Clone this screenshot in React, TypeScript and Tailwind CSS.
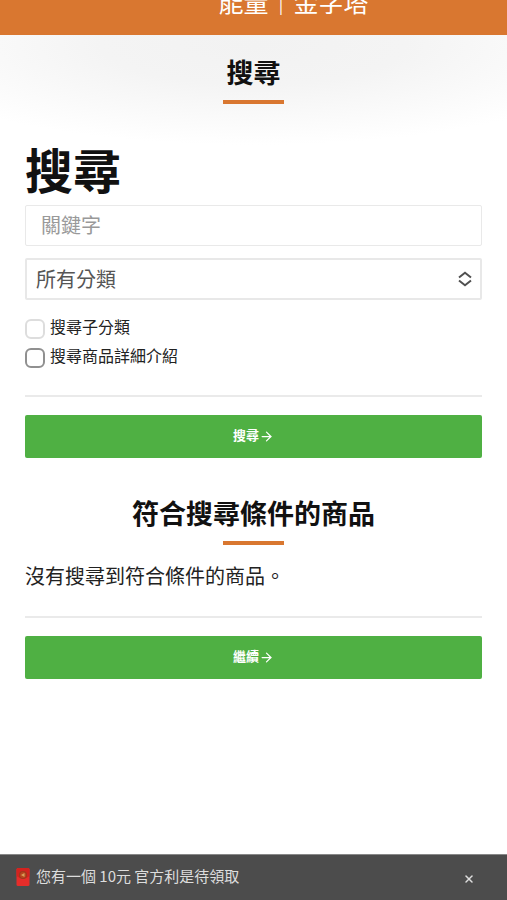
import { FC, ReactNode, useState } from "react"
import { ArrowRight, X } from "lucide-react"

type ChildrenProps = { children: ReactNode }

const SectionTitle: FC<ChildrenProps> = ({ children }) => (
  <h2 className="flex flex-col items-center gap-3 text-[27px] leading-8 font-bold text-[#111]">
    {children}
    <span className="h-1 w-[61px] bg-[#d97730]" />
  </h2>
)

const ActionButton: FC<ChildrenProps & { type?: "submit" | "button" }> = ({ children, type = "button" }) => (
  <button
    type={type}
    className="flex h-[43px] w-full items-center justify-center rounded-xs bg-[#4fb043] text-[13px] leading-5 font-bold text-white"
  >
    <span className="pb-1">{children}</span>
    <ArrowRight className="size-[15px]" strokeWidth={2} />
  </button>
)

const CheckOption: FC<{ id: string; label: string; className: string }> = ({ id, label, className }) => (
  <div className="flex h-[29px] items-start gap-[5px]">
    <input
      id={id}
      type="checkbox"
      className={`mt-[5px] size-5 shrink-0 appearance-none rounded-md border-2 bg-white checked:bg-[#4fb043] ${className}`}
    />
    <label htmlFor={id} className="text-base leading-6 text-[#222]">{label}</label>
  </div>
)

const SelectArrows: FC = () => (
  <svg
    viewBox="0 0 14 16"
    className="pointer-events-none col-start-1 row-start-1 mr-2.5 h-4 w-3.5 justify-self-end"
    fill="none"
    stroke="#505050"
    strokeWidth="2"
    aria-hidden="true"
  >
    <path d="M1 6.500 7 1.700l6 4.800M1 9.500l6 4.800 6-4.800" />
  </svg>
)

const RedPacket: FC = () => (
  <svg viewBox="0 0 14 18" className="h-[18px] w-3.5 shrink-0" aria-hidden="true">
    <rect x="0.5" y="0" width="13" height="18" rx="1.5" fill="#e62d2a" />
    <path d="M0.5 1.500Q0.500 0 2 0h10q1.500 0 1.500 1.500V8Q7 13 0.500 8z" fill="#d3231f" />
    <circle cx="7" cy="7" r="4" fill="#9c3a1c" />
    <circle cx="7" cy="7" r="3" fill="#b8461f" />
    <path d="M5 7 8.500 5v4z" fill="#d9a05c" />
  </svg>
)

const SearchForm: FC = () => (
  <form onSubmit={(e) => e.preventDefault()}>
    <input
      type="text"
      aria-label="關鍵字"
      placeholder="關鍵字"
      className="h-[41px] w-full rounded-xs border border-[#e9e9e9] px-[15px] pb-0.5 text-xl text-[#444] placeholder:text-[#999]"
    />
    <div className="mt-3 grid items-center">
      <select
        aria-label="所有分類"
        className="col-start-1 row-start-1 h-[42px] w-full appearance-none rounded-xs border-2 border-[#e8e8e8] bg-white px-[9px] text-xl text-[#555]"
      >
        <option>所有分類</option>
      </select>
      <SelectArrows />
    </div>
    <div className="mt-3.5">
      <CheckOption id="sub-category" label="搜尋子分類" className="border-[#ddd]" />
      <CheckOption id="description" label="搜尋商品詳細介紹" className="border-[#909090]" />
    </div>
    <hr className="mt-[23px] mb-[18px] border-t-2 border-[#eaeaea]" />
    <ActionButton type="submit">搜尋</ActionButton>
  </form>
)

export default function App() {
  const [noticeOpen, setNoticeOpen] = useState(true)

  return (
    <div lang="zh-Hant" className="flex min-h-screen flex-col bg-white font-['Noto_Sans_CJK_TC',sans-serif]">
      <header className="flex h-[35px] items-end justify-center overflow-hidden bg-[#d97730] pb-[18px] pl-20">
        <p className="text-[25px] leading-8 text-white">能量｜金字塔</p>
      </header>

      <main className="grow bg-[radial-gradient(ellipse_75%_100px_at_50%_10px,#f2f2f2,#f4f4f4_40%,#ffffff)] bg-no-repeat px-[25px] pt-[21px] pb-10">
        <SectionTitle>搜尋</SectionTitle>
        <h1 className="mt-[34px] mb-[7px] text-5xl leading-[60px] font-bold text-[#111]">搜尋</h1>
        <SearchForm />

        <section className="mt-[39px]">
          <SectionTitle>符合搜尋條件的商品</SectionTitle>
          <p className="mt-[17px] text-xl leading-7 text-[#222]">沒有搜尋到符合條件的商品。</p>
          <hr className="mt-[26px] mb-[18px] border-t-2 border-[#eaeaea]" />
          <ActionButton>繼續</ActionButton>
        </section>
      </main>

      {noticeOpen && (
        <aside className="flex h-[46px] items-center gap-1.5 border-t border-[#888] bg-[#4c4c4c] pr-8 pb-0.5 pl-4 text-[15px] text-[#ddd]">
          <RedPacket />
          <p>您有一個 10元 官方利是待領取</p>
          <button type="button" aria-label="關閉" className="ml-auto pt-1" onClick={() => setNoticeOpen(false)}>
            <X className="size-3" strokeWidth={3} />
          </button>
        </aside>
      )}
    </div>
  )
}
